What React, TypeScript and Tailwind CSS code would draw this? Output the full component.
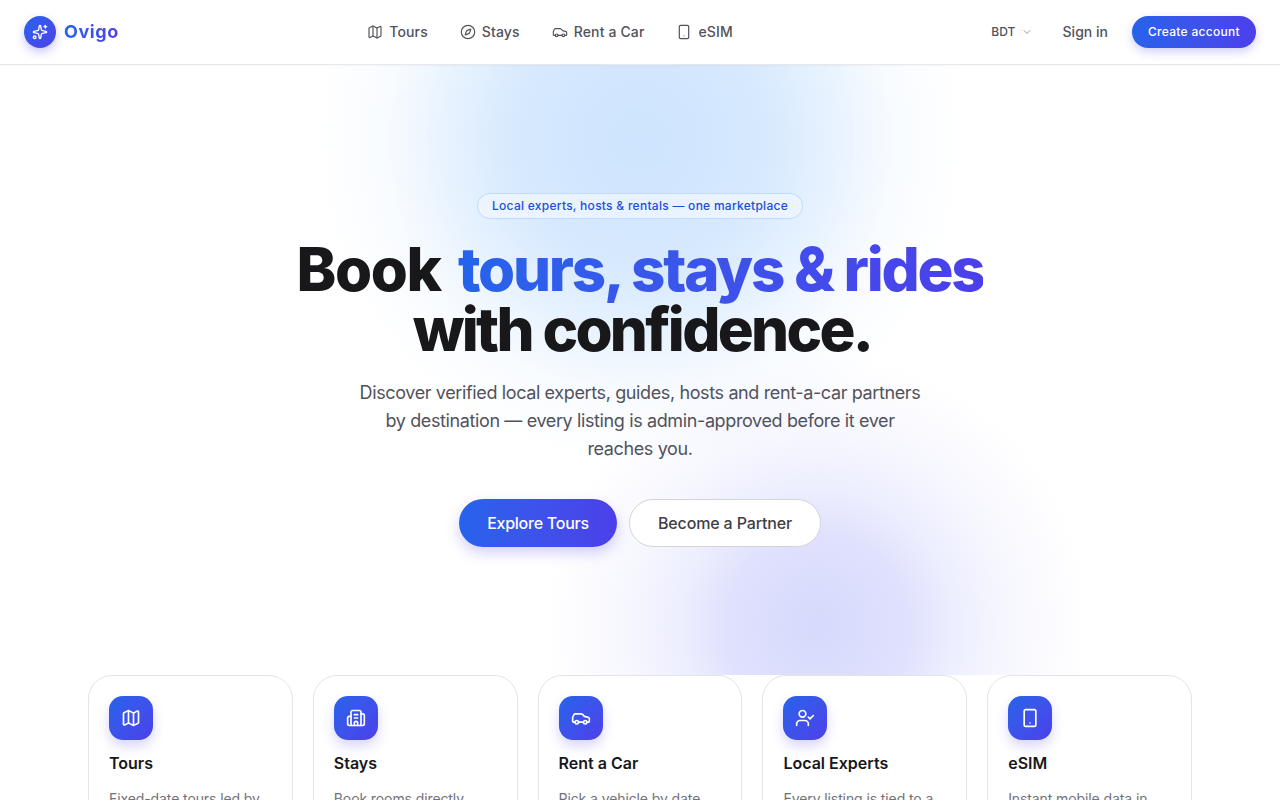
import { Building2, Car, ChevronDown, Compass, Map, Smartphone, Sparkles, UserCheck } from 'lucide-react';

const navLinks = [
  { label: 'Tours', icon: Map },
  { label: 'Stays', icon: Compass },
  { label: 'Rent a Car', icon: Car },
  { label: 'eSIM', icon: Smartphone },
];

const services = [
  { title: 'Tours', text: 'Fixed-date tours led by verified local experts.', icon: Map },
  { title: 'Stays', text: 'Book rooms directly from approved local hosts.', icon: Building2 },
  { title: 'Rent a Car', text: 'Pick a vehicle by date from trusted partners.', icon: Car },
  { title: 'Local Experts', text: 'Every listing is tied to a reviewed local expert.', icon: UserCheck },
  { title: 'eSIM', text: 'Instant mobile data in every destination.', icon: Smartphone },
];

function Header() {
  return (
    <header className="relative z-10 flex h-[65px] items-center justify-between border-b border-[#e8e8ec] bg-white px-6 shadow-[0_1px_2px_rgba(0,0,0,0.04)]">
      <div className="flex items-center gap-2">
        <span className="flex h-8 w-8 items-center justify-center rounded-full bg-gradient-to-br from-[#2563eb] to-[#4b3fea] text-white shadow-[0_4px_10px_rgba(79,70,229,0.3)]">
          <Sparkles size={16} strokeWidth={2} />
        </span>
        <span className="bg-gradient-to-r from-[#2563eb] to-[#4b3fea] bg-clip-text text-lg font-bold tracking-[0.6px] text-transparent">
          Ovigo
        </span>
      </div>
      <nav className="mr-[10px] flex items-center gap-8">
        {navLinks.map(({ label, icon: Icon }) => (
          <a key={label} className="flex items-center gap-1.5 text-sm font-medium tracking-[0.01em] text-[#52525b]">
            <Icon size={16} strokeWidth={1.75} />
            {label}
          </a>
        ))}
      </nav>
      <div className="flex items-center gap-6">
        <button className="mr-[6px] flex items-center gap-[5px] text-xs font-medium tracking-[0.01em] text-[#52525b]">
          BDT
          <ChevronDown size={12} className="text-[#9a9aa3]" />
        </button>
        <button className="text-sm font-medium text-[#52525b]">Sign in</button>
        <button className="h-8 rounded-full bg-gradient-to-r from-[#2563eb] to-[#4b3fea] px-4 text-xs font-medium tracking-[0.3px] text-white shadow-[0_4px_10px_rgba(79,70,229,0.25)]">
          Create account
        </button>
      </div>
    </header>
  );
}

function Hero() {
  return (
    <section className="relative overflow-hidden py-32 text-center">
      <div className="absolute left-[315px] top-[-250px] h-[650px] w-[650px] rounded-full bg-[radial-gradient(circle_closest-side,rgba(147,197,253,0.46)_0%,rgba(147,197,253,0.38)_38%,rgba(147,197,253,0.23)_58%,rgba(147,197,253,0.065)_78%,rgba(147,197,253,0)_100%)]" />
      <div className="absolute left-[545px] top-[288px] h-[545px] w-[545px] rounded-full bg-[radial-gradient(circle_closest-side,rgba(170,175,250,0.47)_0%,rgba(170,175,250,0.38)_32%,rgba(170,175,250,0.2)_52%,rgba(170,175,250,0.094)_72%,rgba(170,175,250,0.024)_92%,rgba(170,175,250,0)_100%)]" />
      <div className="relative flex flex-col items-center">
        <span className="flex h-[26px] items-center rounded-full border border-[#bfdbfe] bg-[#eff6ff]/80 px-3.5 text-xs font-medium tracking-[0.27px] text-[#1d4ed8]">
          Local experts, hosts &amp; rentals — one marketplace
        </span>
        <h1 className="mt-5 text-[60px] font-extrabold leading-[60px] tracking-[-0.045em] text-[#18181b]">
          <span className="mr-[7px] tracking-[-1.45px]">Book</span>{' '}
          <span className="bg-gradient-to-r from-[#2563eb] to-[#4b3fea] bg-clip-text tracking-[-2.25px] text-transparent">
            tours, stays &amp; rides
          </span>
          <br />
          <span className="ml-[4px]">with confidence.</span>
        </h1>
        <p className="mt-5 w-[570px] text-lg leading-7 tracking-[-0.021em] text-[#52525b]">
          Discover verified local experts, guides, hosts and rent-a-car partners by destination — every listing is
          admin-approved before it ever reaches you.
        </p>
        <div className="mt-9 flex items-center gap-3">
          <button className="h-12 w-[158px] rounded-full bg-gradient-to-r from-[#2563eb] to-[#4b3fea] text-base font-medium tracking-[-0.25px] text-white shadow-[0_6px_14px_rgba(79,70,229,0.25)]">
            Explore Tours
          </button>
          <button className="h-12 w-[192px] rounded-full border border-[#d4d4d8] bg-white text-base font-medium tracking-[-0.15px] text-[#3f3f46]">
            Become a Partner
          </button>
        </div>
      </div>
    </section>
  );
}

function ServiceCards() {
  return (
    <section className="mx-auto grid max-w-6xl grid-cols-5 gap-5 px-6">
      {services.map(({ title, text, icon: Icon }) => (
        <article key={title} className="rounded-3xl border border-[#e4e4e7] bg-white p-5">
          <span className="flex h-11 w-11 items-center justify-center rounded-[14px] bg-gradient-to-br from-[#2563eb] to-[#4b3fea] text-white shadow-[0_6px_12px_rgba(79,70,229,0.22)]">
            <Icon size={20} strokeWidth={2} />
          </span>
          <h3 className="mt-[11px] text-base font-semibold leading-6 text-[#18181b]">{title}</h3>
          <p className="mt-3 text-sm leading-6 tracking-[-0.1px] text-[#71717a]">{text}</p>
        </article>
      ))}
    </section>
  );
}

export default function App() {
  return (
    <div className="h-[800px] overflow-hidden bg-white font-['Inter',sans-serif]">
      <Header />
      <Hero />
      <ServiceCards />
    </div>
  );
}
